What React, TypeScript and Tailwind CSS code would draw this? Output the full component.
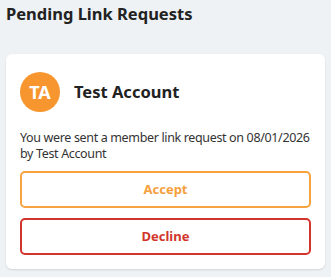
export default function App() {
  return (
    <div
      className="w-[331px] h-[277px] bg-[#eef2f5] px-[6px] pt-[3px]"
      style={{ fontFamily: '"Noto Sans", "Open Sans", sans-serif' }}
    >
      <h1 className="text-[16.5px] leading-[22px] font-bold text-[#222]">
        Pending Link Requests
      </h1>
      <div className="mt-[29px] bg-white rounded-[6px] shadow-[0_1px_2px_rgba(0,0,0,0.12)] px-[14px] pt-[18px] pb-[14px]">
        <div className="flex items-center gap-[14px]">
          <div className="w-[40px] h-[40px] rounded-full bg-[#f7962f] flex items-center justify-center text-white text-[18px] font-bold">
            TA
          </div>
          <span className="text-[16.5px] font-bold text-[#222]">Test Account</span>
        </div>
        <p className="mt-[18px] text-[12.5px] leading-[16px] tracking-[-0.35px] text-[#333]">
          You were sent a member link request on 08/01/2026 by Test Account
        </p>
        <div className="mt-[9px] flex flex-col gap-[10px]">
          <button className="h-[37px] rounded-[5px] border-2 border-[#f7a33f] text-[#f5a03c] text-[13px] font-bold">
            Accept
          </button>
          <button className="h-[37px] rounded-[5px] border-2 border-[#d1352b] text-[#d1352b] text-[13px] font-bold">
            Decline
          </button>
        </div>
      </div>
    </div>
  );
}
